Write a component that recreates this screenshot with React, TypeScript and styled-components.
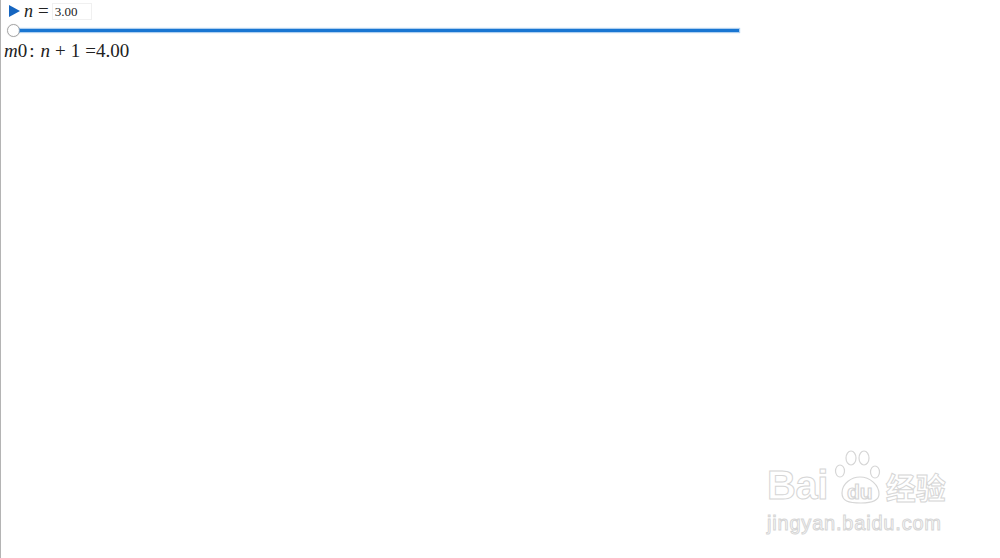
import React from "react";
import styled, { createGlobalStyle } from "styled-components";

const GlobalStyle = createGlobalStyle`
  html, body {
    margin: 0;
    padding: 0;
    background: #ffffff;
  }
  #root {
    min-height: 100vh;
  }
`;

const Page = styled.div`
  position: relative;
  width: 1000px;
  height: 558px;
  box-sizing: border-box;
  border-left: 1px solid #b4b4b4;
  overflow: hidden;
  font-family: "Liberation Serif", "DejaVu Serif", serif;
  color: #222;
`;

const Panel = styled.div`
  display: flex;
  flex-direction: column;
  width: 738px;
  padding-top: 2px;
`;

const ControlRow = styled.div`
  display: flex;
  align-items: center;
  height: 18px;
  padding-left: 7px;
`;

const PlayButton = styled.button`
  display: flex;
  align-items: center;
  justify-content: center;
  width: 12px;
  height: 14px;
  padding: 0;
  margin: 0;
  border: none;
  background: none;
  cursor: pointer;
`;

const Var = styled.span`
  font-style: italic;
  font-size: 18px;
  margin-left: 4px;
`;

const Eq = styled.span`
  font-size: 19px;
  margin: 0 3px 0 5px;
`;

const ValueBox = styled.input`
  width: 40px;
  height: 17px;
  box-sizing: border-box;
  border: 1px solid #f0f0f0;
  padding: 1px 0 0 2px;
  font-family: "Liberation Serif", serif;
  font-size: 13px;
  color: #222;
  outline: none;
  background: #fff;
`;

const SliderWrap = styled.div`
  display: flex;
  align-items: center;
  height: 20px;
  padding-left: 6px;
`;

const Thumb = styled.div`
  width: 11px;
  height: 11px;
  border-radius: 50%;
  border: 1px solid #a8a8a8;
  background: #fff;
  flex: none;
  box-shadow: 0 0 1px rgba(0, 0, 0, 0.2);
`;

const Track = styled.div`
  flex: 1;
  height: 3px;
  background: #1976d2;
  box-shadow: 0 0 1px 1px rgba(25, 118, 210, 0.35);
`;

const Formula = styled.div`
  display: flex;
  align-items: baseline;
  font-size: 19px;
  line-height: 20px;
  padding-left: 3px;
  margin-top: 1px;
  white-space: pre;
`;

const It = styled.span`
  font-style: italic;
`;

const Sym = styled.span<{ $l: number; $r: number }>`
  margin-left: ${(p) => p.$l}px;
  margin-right: ${(p) => p.$r}px;
`;

const Watermark = styled.div`
  position: absolute;
  left: 766px;
  top: 449px;
  display: flex;
  flex-direction: column;
  font-family: "Liberation Sans", Arial, sans-serif;
  color: #ffffff;
  -webkit-text-stroke: 1px #d6d6d6;
`;

const LogoRow = styled.div`
  display: flex;
  align-items: flex-end;
  height: 56px;
`;

const LogoWord = styled.span`
  font-size: 40px;
  line-height: 40px;
  font-weight: bold;
  letter-spacing: -0.5px;
`;

const LogoCn = styled.span`
  font-family: "Noto Sans CJK SC", sans-serif;
  font-size: 30px;
  line-height: 38px;
  font-weight: bold;
`;

const Domain = styled.div`
  font-size: 20px;
  line-height: 24px;
  margin-top: 6px;
  letter-spacing: 0.8px;
`;

const Paw = () => (
  <svg width="58" height="56" viewBox="0 0 58 56" fill="#fff" stroke="#d6d6d6" strokeWidth="1.2">
    <ellipse cx="23" cy="9" rx="5" ry="7" />
    <ellipse cx="36" cy="9" rx="5" ry="7" />
    <ellipse cx="12" cy="22" rx="4.5" ry="6" />
    <ellipse cx="47" cy="23" rx="4.5" ry="6" />
    <path d="M14 44 C14 34 24 28 32 28 C42 28 51 36 51 45 C51 52 44 54 33 54 C20 54 14 52 14 44 Z" />
    <text x="19" y="50" fontFamily="Liberation Sans, sans-serif" fontSize="21" fontWeight="bold">du</text>
  </svg>
);

const PlayIcon = () => (
  <svg width="11" height="12" viewBox="0 0 11 12">
    <path d="M0 0 L11 6 L0 12 Z" fill="#1565c0" />
  </svg>
);

export default function App() {
  return (
    <Page>
      <GlobalStyle />
      <Panel>
        <ControlRow>
          <PlayButton aria-label="play">
            <PlayIcon />
          </PlayButton>
          <Var>n</Var>
          <Eq>=</Eq>
          <ValueBox defaultValue="3.00" />
        </ControlRow>
        <SliderWrap>
          <Thumb />
          <Track />
        </SliderWrap>
        <Formula>
          <It>m</It>
          <span>0</span>
          <Sym $l={2} $r={6}>:</Sym>
          <It>n</It>
          <Sym $l={5} $r={5}>+</Sym>
          <span>1</span>
          <Sym $l={5} $r={0}>=</Sym>
          <span>4.00</span>
        </Formula>
      </Panel>
      <Watermark>
        <LogoRow>
          <LogoWord>Bai</LogoWord>
          <Paw />
          <LogoCn>经验</LogoCn>
        </LogoRow>
        <Domain>jingyan.baidu.com</Domain>
      </Watermark>
    </Page>
  );
}
